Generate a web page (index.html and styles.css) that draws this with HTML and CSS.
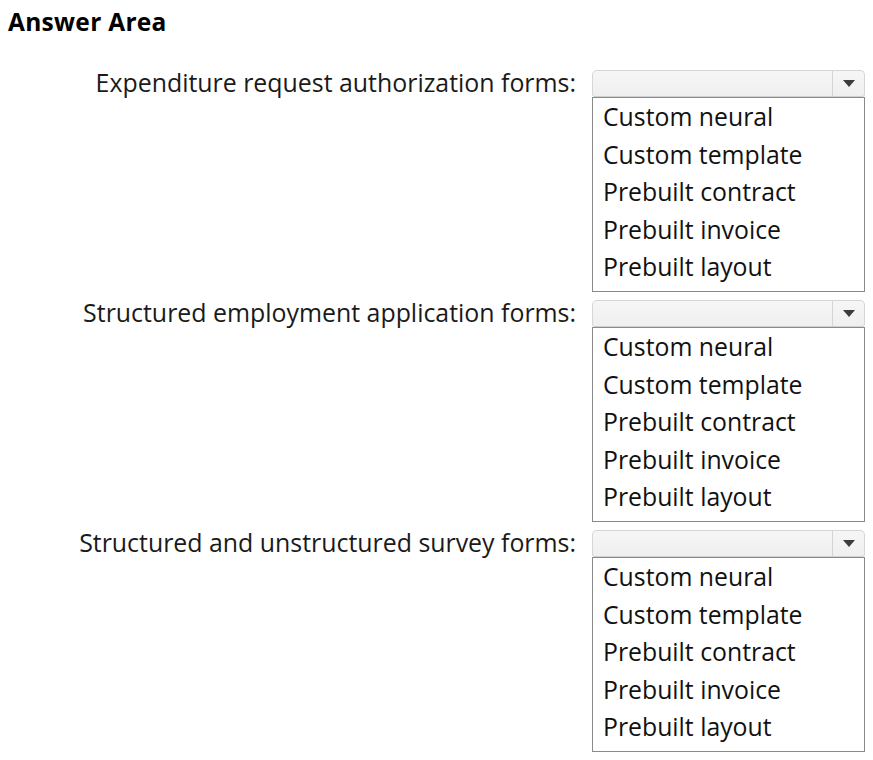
FILE: index.html
```html
<!DOCTYPE html>
<html>
<head>
<meta charset="utf-8">
<link rel="stylesheet" href="styles.css">
</head>
<body>
<h1 class="title">Answer Area</h1>
<div class="rows">
  <div class="row">
    <div class="label">Expenditure request authorization forms:</div>
    <div class="control">
      <div class="select"><span class="select-value"></span><span class="select-btn"><span class="tri"></span></span></div>
      <ul class="list">
        <li>Custom neural</li>
        <li>Custom template</li>
        <li>Prebuilt contract</li>
        <li>Prebuilt invoice</li>
        <li>Prebuilt layout</li>
      </ul>
    </div>
  </div>
  <div class="row">
    <div class="label">Structured employment application forms:</div>
    <div class="control">
      <div class="select"><span class="select-value"></span><span class="select-btn"><span class="tri"></span></span></div>
      <ul class="list">
        <li>Custom neural</li>
        <li>Custom template</li>
        <li>Prebuilt contract</li>
        <li>Prebuilt invoice</li>
        <li>Prebuilt layout</li>
      </ul>
    </div>
  </div>
  <div class="row">
    <div class="label">Structured and unstructured survey forms:</div>
    <div class="control">
      <div class="select"><span class="select-value"></span><span class="select-btn"><span class="tri"></span></span></div>
      <ul class="list">
        <li>Custom neural</li>
        <li>Custom template</li>
        <li>Prebuilt contract</li>
        <li>Prebuilt invoice</li>
        <li>Prebuilt layout</li>
      </ul>
    </div>
  </div>
</div>
</body>
</html>
```
FILE: styles.css
```css
html, body {
  margin: 0;
  padding: 0;
  background: #ffffff;
}
body {
  font-family: "Open Sans", "Noto Sans", "DejaVu Sans", sans-serif;
  color: #1a1a1a;
}
.title {
  margin: 0;
  padding: 5px 0 0 8px;
  font-size: 24.5px;
  font-weight: 700;
  line-height: 34px;
  letter-spacing: 0.3px;
  color: #000;
}
.rows {
  display: flex;
  flex-direction: column;
  gap: 8px;
  padding-top: 31px;
}
.row {
  display: flex;
  align-items: flex-start;
}
.label {
  width: 576px;
  text-align: right;
  font-size: 24.9px;
  line-height: 26px;
  white-space: nowrap;
  margin-top: -1px;
}
.control {
  margin-left: 16px;
  width: 273px;
  display: flex;
  flex-direction: column;
}
.select {
  height: 25px;
  border: 1px solid #d6d6d6;
  border-bottom-color: #cfcfcf;
  border-radius: 5px 5px 3px 3px;
  background: linear-gradient(#f6f6f6, #efefef);
  display: flex;
  box-sizing: content-box;
}
.select-value {
  flex: 1;
}
.select-btn {
  width: 31px;
  border-left: 1px solid #d4d4d4;
  display: flex;
  align-items: center;
  justify-content: center;
}
.tri {
  width: 0;
  height: 0;
  border-left: 6px solid transparent;
  border-right: 6px solid transparent;
  border-top: 7px solid #3c3c3c;
}
.list {
  list-style: none;
  margin: 0;
  padding: 0 0 3px 10px;
  border: 1px solid #8a8a8a;
  height: 190px;
  box-sizing: content-box;
  font-size: 24.8px;
  line-height: 37.6px;
  color: #111;
}
```
